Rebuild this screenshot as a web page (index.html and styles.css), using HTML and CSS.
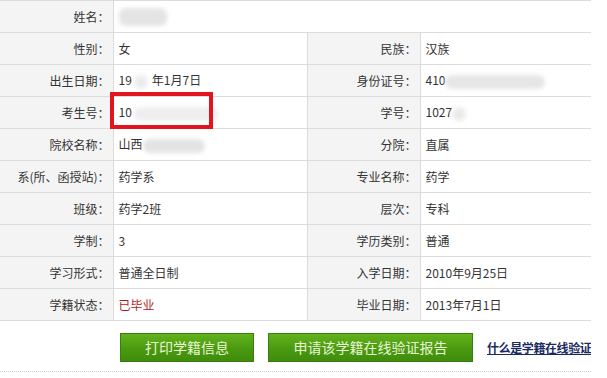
FILE: index.html
```html
<!DOCTYPE html>
<html lang="zh-CN">
<head>
<meta charset="utf-8">
<title>学籍信息</title>
<link rel="stylesheet" href="styles.css">
</head>
<body>
<div class="page">
  <table class="info">
    <colgroup>
      <col class="c-label"><col class="c-value"><col class="c-label2"><col class="c-value2">
    </colgroup>
    <tr><th>姓名：</th><td colspan="3"><span class="blur b-name"></span></td></tr>
    <tr><th>性别：</th><td>女</td><th>民族：</th><td>汉族</td></tr>
    <tr><th>出生日期：</th><td>19<span class="blur b-year"></span>年1月7日</td><th>身份证号：</th><td>410<span class="blur b-id"></span></td></tr>
    <tr><th>考生号：</th><td>10<span class="blur b-exam"></span></td><th>学号：</th><td>1027<span class="blur b-sno"></span></td></tr>
    <tr><th>院校名称：</th><td>山西<span class="blur b-school"></span></td><th>分院：</th><td>直属</td></tr>
    <tr><th>系(所、函授站)：</th><td>药学系</td><th>专业名称：</th><td>药学</td></tr>
    <tr><th>班级：</th><td>药学2班</td><th>层次：</th><td>专科</td></tr>
    <tr><th>学制：</th><td>3</td><th>学历类别：</th><td>普通</td></tr>
    <tr><th>学习形式：</th><td>普通全日制</td><th>入学日期：</th><td>2010年9月25日</td></tr>
    <tr><th>学籍状态：</th><td class="status">已毕业</td><th>毕业日期：</th><td>2013年7月1日</td></tr>
  </table>
  <div class="actions">
    <button class="btn btn-print" type="button">打印学籍信息</button>
    <button class="btn btn-apply" type="button">申请该学籍在线验证报告</button>
    <a class="help" href="#">什么是学籍在线验证</a>
  </div>
  <div class="mark"></div>
</div>
</body>
</html>
```

FILE: styles.css
```css
* { box-sizing: border-box; }
html, body { margin: 0; padding: 0; background: #fff; }
body {
  font-family: "Noto Sans CJK SC", "Liberation Sans", sans-serif;
  font-size: 12px;
  color: #333;
}
.page {
  position: relative;
  width: 591px;
  overflow: hidden;
}
.info {
  width: 591px;
  border-collapse: collapse;
  table-layout: fixed;
}
.c-label { width: 113px; }
.c-value { width: 194px; }
.c-label2 { width: 113px; }
.c-value2 { width: 171px; }
.info th, .info td {
  height: 32px;
  padding: 0;
  border: 1px solid #dcdcdc;
  line-height: 16px;
  white-space: nowrap;
  overflow: hidden;
}
.info tr th:first-child { border-left: none; }
.info tr td:last-child { border-right: none; }
.info th {
  background: #f4f4f4;
  font-weight: normal;
  text-align: right;
  padding-right: 3px;
  color: #333;
}
.info td {
  text-align: left;
  padding-left: 5px;
  background: #fff;
}
.info td.status { color: #b01c1c; }
.blur {
  display: inline-block;
  height: 14px;
  vertical-align: middle;
  background: #e2e2e2;
  border-radius: 7px;
  filter: blur(2px);
}
.b-name { width: 48px; height: 18px; background: #e4e4e4; }
.b-year { width: 14px; background: #ececec; margin: 0 4px 0 2px; }
.b-exam { width: 84px; background: #eeeeee; margin-left: 2px; }
.b-id { width: 100px; background: #e6e6e6; }
.b-sno { width: 14px; background: #ebebeb; }
.b-school { width: 62px; background: #e3e3e3; }
.actions {
  display: flex;
  align-items: center;
  gap: 14px;
  padding: 12px 0 9px 120px;
  border-bottom: 1px dotted #cfcfcf;
  white-space: nowrap;
}
.btn {
  height: 29px;
  margin: 0;
  padding: 0;
  border: 1px solid #3c7a12;
  background: linear-gradient(#62b21c, #4a9a10 55%, #3f8c0b);
  color: #eaf6d6;
  font-family: "Noto Sans CJK SC", "Liberation Sans", sans-serif;
  font-size: 14px;
  line-height: 27px;
  flex: none;
}
.btn-print { width: 134px; }
.btn-apply { width: 205px; }
.help {
  color: #1b2a5e;
  font-size: 12px;
  font-weight: bold;
  letter-spacing: -0.4px;
  text-decoration: underline;
  flex: none;
}
.mark {
  position: absolute;
  left: 110px;
  top: 92px;
  width: 103px;
  height: 37px;
  border: 4px solid #e2141d;
}
```
